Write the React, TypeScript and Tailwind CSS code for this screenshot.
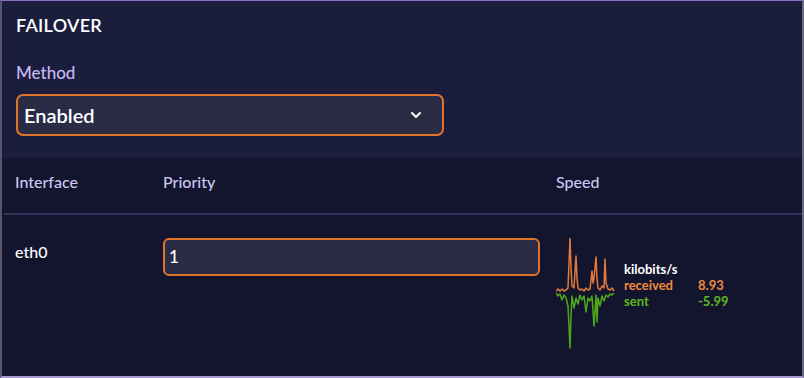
import { ChevronDown } from 'lucide-react'

const received =
  '0,53 2,51 4,53 6,51 8,53 10,52 12,50 14,0 15,30 16,48 18,50 20,18 21,40 22,50 24,52 26,51 28,53 30,50 32,52 34,51 36,33 37,45 38,40 40,19 41,40 42,50 44,52 46,48 48,50 49,21 50,45 52,51 54,52 56,50 58,53'
const sent =
  '0,55 2,58 4,56 6,62 8,57 10,60 12,68 14,110 15,78 16,58 18,70 20,60 22,66 24,57 26,62 28,58 30,74 32,60 34,63 36,58 38,88 40,57 41,84 42,60 44,68 46,58 48,63 50,57 52,59 54,56 56,57 58,55'

function SpeedChart() {
  return (
    <svg width="60" height="112" viewBox="0 0 60 112" className="shrink-0">
      <polyline points={sent} fill="none" stroke="#4fa81a" strokeWidth="1.5" strokeLinejoin="round" />
      <polyline points={received} fill="none" stroke="#e5793a" strokeWidth="1.5" strokeLinejoin="round" />
    </svg>
  )
}

export default function App() {
  return (
    <div
      className="w-[804px] h-[378px] overflow-hidden bg-[#13152f] border-l-2 border-r-2 border-b-2 border-t border-l-[#55566e] border-r-[#6b6a84] border-b-[#a89ad0] border-t-[#8a6fc8] flex flex-col"
      style={{ fontFamily: 'Lato, "Noto Sans", sans-serif' }}
    >
      <div className="bg-[#1b1d3d] h-[157px] shrink-0 px-[14px] pt-[13px]">
        <div className="text-white text-[18px] font-semibold tracking-[0.3px] leading-[22px]">FAILOVER</div>
        <div className="text-[#c9b9f2] text-[17px] font-medium mt-[26px] leading-[22px]">Method</div>
        <div className="mt-[10px] w-[428px] h-[42px] rounded-[7px] border-2 border-[#e0742a] bg-[#2a2b45] flex items-center justify-between pl-[6px] pr-[18px]">
          <span className="text-white text-[20px] font-semibold">Enabled</span>
          <ChevronDown className="w-[16px] h-[16px] text-white" strokeWidth={3} />
        </div>
      </div>
      <div className="flex-1">
        <div className="h-[57px] flex items-start pt-[12px] text-[#cfc6f2] text-[16px] font-medium border-b-2 border-[#33365a] ml-[2px]">
          <div className="w-[159px] pl-[11px]">Interface</div>
          <div className="w-[393px]">Priority</div>
          <div>Speed</div>
        </div>
        <div className="flex pt-[23px]">
          <div className="w-[161px] pl-[13px] pt-[2px] text-white text-[16px] font-medium">eth0</div>
          <div className="w-[377px] h-[38px] rounded-[6px] border-2 border-[#e0742a] bg-[#2a2b45] flex items-center pl-[4px] text-white text-[17px] font-medium">
            1
          </div>
          <div className="ml-[16px] flex items-start">
            <SpeedChart />
            <div className="ml-[8px] mt-[23px] text-[13px] font-bold leading-[16px]">
              <div className="text-white">kilobits/s</div>
              <div className="flex">
                <span className="w-[74px] text-[#f08a3c]">received</span>
                <span className="text-[#f08a3c]">8.93</span>
              </div>
              <div className="flex">
                <span className="w-[74px] text-[#5fb61c]">sent</span>
                <span className="text-[#5fb61c]">-5.99</span>
              </div>
            </div>
          </div>
        </div>
      </div>
    </div>
  )
}
